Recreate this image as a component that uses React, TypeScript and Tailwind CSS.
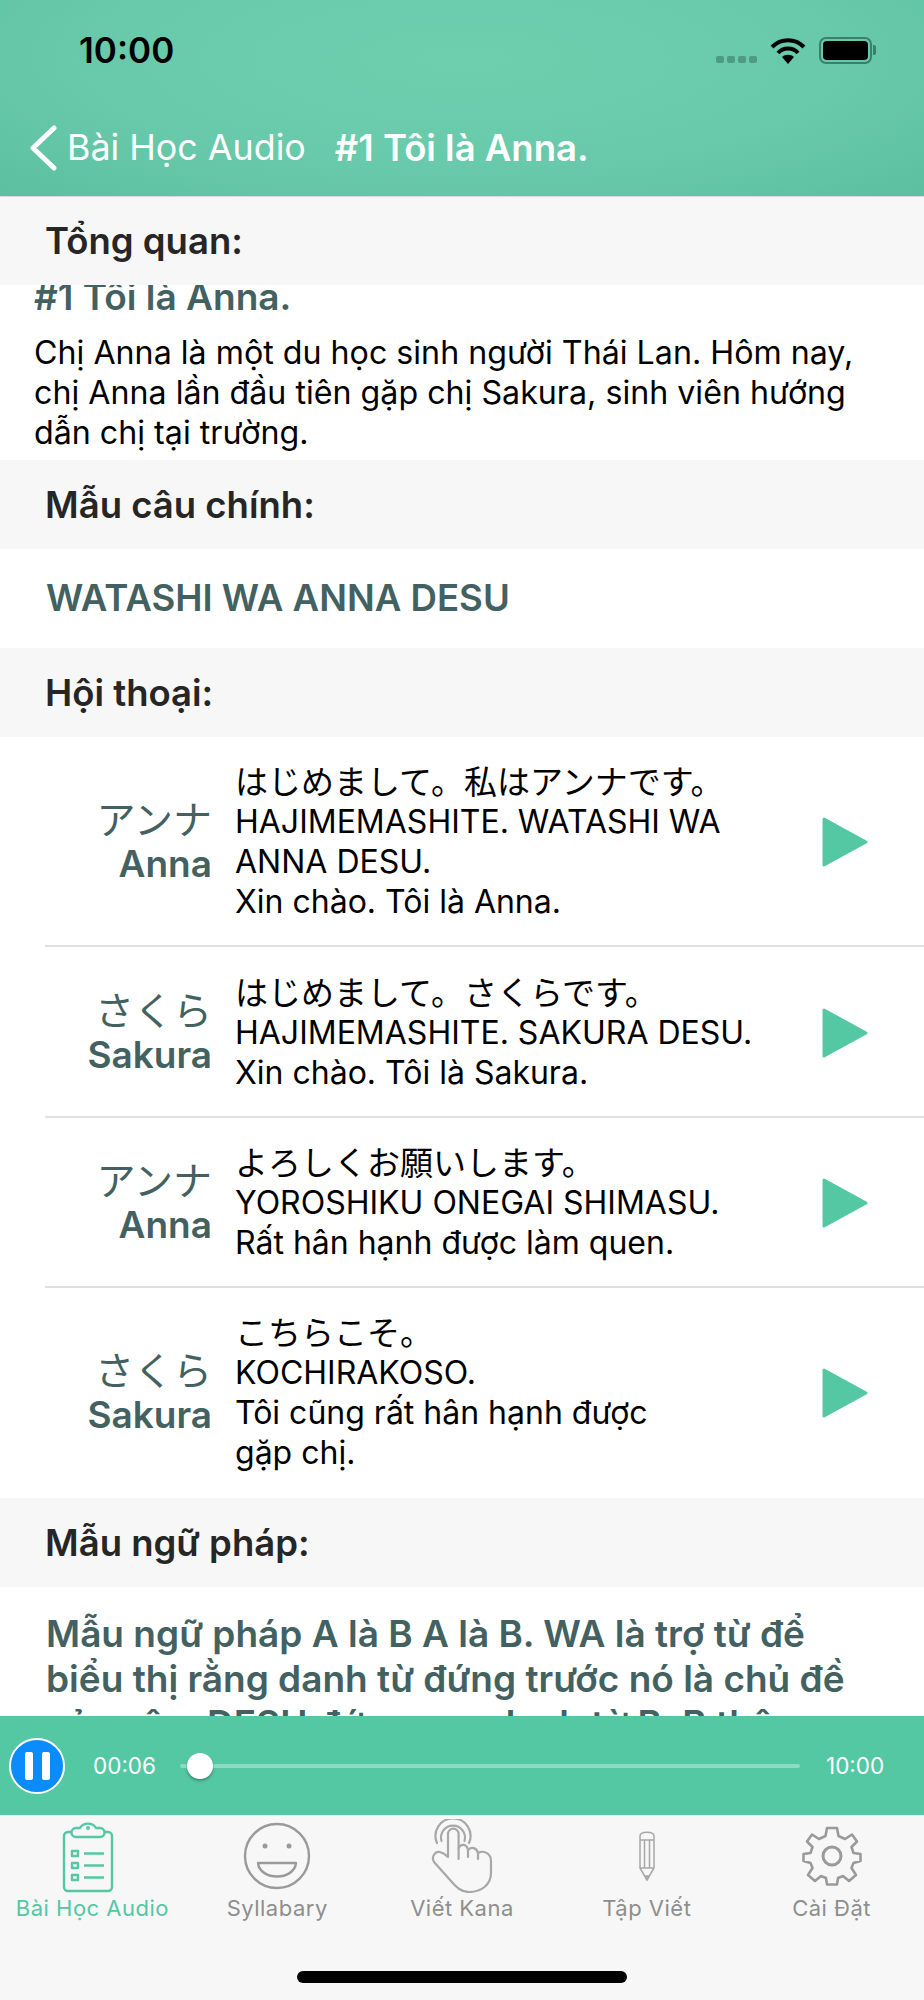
import React from "react";

const SectionHeader = ({ title }: { title: string }) => (
  <div className="h-[89px] shrink-0 bg-[#f7f7f7] pt-[23px] pl-[45px] text-[36.5px] leading-[44px] font-semibold text-[#262626]">
    {title}
  </div>
);

const PlayIcon = () => (
  <svg width="46" height="52" viewBox="0 0 46 52">
    <path d="M2 3 L44 26 L2 49 Z" fill="#54c7a3" stroke="#54c7a3" strokeWidth="3" strokeLinejoin="round" />
  </svg>
);

const dialogs = [
  {
    jp: "アンナ",
    name: "Anna",
    lines: ["はじめまして。私はアンナです。", "HAJIMEMASHITE. WATASHI WA", "ANNA DESU.", "Xin chào. Tôi là Anna."],
    h: "h-[210px]",
  },
  {
    jp: "さくら",
    name: "Sakura",
    lines: ["はじめまして。さくらです。", "HAJIMEMASHITE. SAKURA DESU.", "Xin chào. Tôi là Sakura."],
    h: "h-[171px]",
  },
  {
    jp: "アンナ",
    name: "Anna",
    lines: ["よろしくお願いします。", "YOROSHIKU ONEGAI SHIMASU.", "Rất hân hạnh được làm quen."],
    h: "h-[170px]",
  },
  {
    jp: "さくら",
    name: "Sakura",
    lines: ["こちらこそ。", "KOCHIRAKOSO.", "Tôi cũng rất hân hạnh được", "gặp chị."],
    h: "h-[210px]",
  },
];

const DialogRow = ({ row, last }: { row: (typeof dialogs)[number]; last: boolean }) => (
  <div className={`relative flex items-center ${row.h}`}>
    <div className="w-[212px] shrink-0 text-right text-[#436161]">
      <div className="text-[39px] leading-[44px]">{row.jp}</div>
      <div className="text-[37px] leading-[44px] font-semibold">{row.name}</div>
    </div>
    <div className="ml-[23px] w-[540px] text-[32px] leading-[40px] text-black">
      {row.lines.map((l, i) => (
        <div key={l} className={i === 0 ? "text-[33px]" : ""}>
          {l}
        </div>
      ))}
    </div>
    <div className="ml-[47px]">
      <PlayIcon />
    </div>
    {!last && <div className="absolute right-0 bottom-0 left-[45px] h-[2px] bg-[#e0e0e0]" />}
  </div>
);

const ClipboardIcon = () => (
  <svg width="60" height="74" viewBox="0 0 60 74" fill="none" stroke="#54c7a3" strokeWidth="2.4" strokeLinejoin="round">
    <path d="M10 13 H6 a4 4 0 0 0 -4 4 V68 a4 4 0 0 0 4 4 H46 a4 4 0 0 0 4 -4 V17 a4 4 0 0 0 -4 -4 H42" />
    <path d="M14 18 a4.5 4.5 0 0 1 0 -9 h4 a9 8 0 0 1 16 0 h4 a4.5 4.5 0 0 1 0 9 Z" />
    <circle cx="26" cy="9" r="0.8" fill="#54c7a3" />
    <rect x="10" y="32" width="6" height="5" />
    <rect x="10" y="44" width="6" height="5" />
    <rect x="10" y="56" width="6" height="5" />
    <path d="M22 34.5 H42 M22 46.5 H42 M22 58.5 H42" />
  </svg>
);

const SmileIcon = () => (
  <svg width="68" height="68" viewBox="0 0 68 68" fill="none" stroke="#9a9a9a" strokeWidth="2.4">
    <circle cx="34" cy="34" r="32" />
    <circle cx="22" cy="24" r="2.5" fill="#9a9a9a" stroke="none" />
    <circle cx="46" cy="24" r="2.5" fill="#9a9a9a" stroke="none" />
    <path d="M15 41 H53 C51 59 17 59 15 41 Z" strokeLinejoin="round" />
  </svg>
);

const HandIcon = () => (
  <svg width="62" height="74" viewBox="0 0 62 74" fill="none" stroke="#a8a8a8" strokeWidth="2.2" strokeLinecap="round" strokeLinejoin="round">
    <path d="M6 24 A17.5 17.5 0 1 1 38 24" />
    <path d="M10.5 22 A12 12 0 1 1 33.5 22" />
    <path d="M17 38 V15 A5.3 5.3 0 0 1 27.6 15 V29 C30 24 36 25 37 31 C40 27 46 29 47 34 C52 31 60 34 60 42 V54 C60 66 50 73 38 73 C30 73 25 68 20 62 L3 43 C0 38 4 32 9 33 C13 34 15 36 17 38 Z" />
    <path d="M27.6 29 V40 M37 31 V38 M47 34 V40" />
  </svg>
);

const PencilIcon = () => (
  <svg width="20" height="52" viewBox="0 0 20 52" fill="none" stroke="#a8a8a8" strokeWidth="1.5" strokeLinejoin="round">
    <path d="M3 6 C3 1 17 1 17 6 V38 L10 50 L3 38 Z" />
    <path d="M3 10 H17 M7.5 10 V38 M12.5 10 V38 M3 38 H17" />
    <path d="M8 46 H12 L10 50 Z" fill="#a8a8a8" />
  </svg>
);

const GearIcon = () => (
  <svg width="60" height="60" viewBox="0 0 60 60" fill="none" stroke="#9a9a9a" strokeWidth="2.6" strokeLinejoin="round">
    <path d="M25 2 H35 L36.5 10 L43 13 L50 8.5 L55 15.5 L49.5 21 L51.5 27 L58.5 28 V35 L51.5 37 L49.5 42 L54 49 L47 55 L41 50 L36 52 L35 58.5 H25 L24 52 L19 50 L13 55 L6 49 L10.5 42 L8.5 37 L1.5 35 V28 L8.5 27 L10.5 21 L5 15.5 L10 8.5 L17 13 L23.5 10 Z" />
    <circle cx="30" cy="30" r="9" strokeWidth="3" />
  </svg>
);

const tabs = [
  { label: "Bài Học Audio", icon: <ClipboardIcon />, active: true },
  { label: "Syllabary", icon: <SmileIcon />, active: false },
  { label: "Viết Kana", icon: <HandIcon />, active: false },
  { label: "Tập Viết", icon: <PencilIcon />, active: false },
  { label: "Cài Đặt", icon: <GearIcon />, active: false },
];

export default function App() {
  return (
    <div className="flex h-[2000px] w-[924px] flex-col overflow-hidden bg-white font-['Inter','Noto_Sans_CJK_JP',sans-serif]">
      {/* nav bar */}
      <div className="h-[197px] shrink-0 border-b border-[#d9d9d9] bg-[radial-gradient(ellipse_at_50%_30%,#6dcfae_0%,#68caaa_55%,#5cc0a0_100%)]">
        <div className="flex h-[100px] items-center justify-between pr-[48px] pl-[79px]">
          <span className="text-[35px] font-semibold text-black">10:00</span>
          <div className="flex items-center">
            <div className="mt-[18px] mr-[13px] flex gap-[3px]">
              {[0, 1, 2, 3].map((i) => (
                <div key={i} className="h-[7px] w-[8px] rounded-[2px] bg-[#4f9a82]" />
              ))}
            </div>
            <svg width="36" height="27" viewBox="0 0 36 27" fill="none" stroke="black" strokeWidth="4">
              <path d="M2 10 C11 1 25 1 34 10" />
              <path d="M8 16 C13 10 23 10 28 16" />
              <path d="M18 27 L12 20 C15 17 21 17 24 20 Z" fill="black" stroke="none" />
            </svg>
            <div className="ml-[13px] flex items-center">
              <div className="h-[27px] w-[53px] rounded-[7px] border-2 border-[#3c7f6b] p-[2px]">
                <div className="h-full w-full rounded-[4px] bg-black" />
              </div>
              <div className="ml-[1px] h-[10px] w-[3px] rounded-r-[2px] bg-[#3c7f6b]" />
            </div>
          </div>
        </div>
        <div className="flex h-[96px] items-center text-white">
          <svg className="ml-[28px]" width="30" height="46" viewBox="0 0 30 46" fill="none" stroke="white" strokeWidth="5" strokeLinecap="round" strokeLinejoin="round">
            <path d="M26 3 L5 23 L26 43" />
          </svg>
          <span className="ml-[9px] text-[35.8px] leading-none">Bài Học Audio</span>
          <span className="ml-[29px] text-[36.5px] leading-none font-semibold">#1 Tôi là Anna.</span>
        </div>
      </div>

      {/* content */}
      <div className="flex min-h-0 flex-1 flex-col overflow-hidden">
        <div className="h-[88px] shrink-0 bg-[#f7f7f7] pt-[22px] pl-[45px] text-[36.5px] leading-[44px] font-semibold text-[#262626]">
          Tổng quan:
        </div>
        <div className="h-[175px] shrink-0 overflow-hidden pl-[34px]">
          <div className="-mt-[10px] text-[37px] leading-[44px] font-semibold text-[#436161]">#1 Tôi là Anna.</div>
          <div className="mt-[14px] text-[32.2px] leading-[40px] text-black">
            <div>Chị Anna là một du học sinh người Thái Lan. Hôm nay,</div>
            <div>chị Anna lần đầu tiên gặp chị Sakura, sinh viên hướng</div>
            <div>dẫn chị tại trường.</div>
          </div>
        </div>
        <SectionHeader title="Mẫu câu chính:" />
        <div className="flex h-[99px] shrink-0 items-center pl-[46px] text-[36.6px] font-semibold text-[#436161]">
          WATASHI WA ANNA DESU
        </div>
        <SectionHeader title="Hội thoại:" />
        <div className="shrink-0">
          {dialogs.map((row, i) => (
            <DialogRow key={i} row={row} last={i === dialogs.length - 1} />
          ))}
        </div>
        <SectionHeader title="Mẫu ngữ pháp:" />
        <div className="pt-[24px] pl-[46px] text-[37px] leading-[45px] font-semibold whitespace-nowrap text-[#436161]">
          <div>Mẫu ngữ pháp A là B A là B. WA là trợ từ để</div>
          <div>biểu thị rằng danh từ đứng trước nó là chủ đề</div>
          <div>của câu. DESU đứng sau danh từ B. B thêm</div>
        </div>
      </div>

      {/* player */}
      <div className="flex h-[99px] shrink-0 items-center bg-[#54c7a3]">
        <div className="ml-[9px] flex h-[56px] w-[56px] items-center justify-center gap-[9px] rounded-full border-2 border-white bg-[#0a8cff]">
          <div className="h-[28px] w-[8px] rounded-[2px] bg-white" />
          <div className="h-[28px] w-[8px] rounded-[2px] bg-white" />
        </div>
        <span className="ml-[28px] w-[62px] text-[22.5px] text-white">00:06</span>
        <div className="relative ml-[25px] h-[4px] w-[620px] rounded-full bg-white/35">
          <div className="absolute top-1/2 left-[7px] h-[26px] w-[26px] -translate-y-1/2 rounded-full bg-white shadow-[0_2px_3px_rgba(0,0,0,0.3)]" />
        </div>
        <span className="ml-[26px] text-[22.5px] text-white">10:00</span>
      </div>

      {/* tab bar */}
      <div className="relative h-[185px] shrink-0 bg-[#f7f7f7]">
        <div className="grid grid-cols-5">
          {tabs.map((t) => (
            <div key={t.label} className="flex flex-col items-center">
              <div className="flex h-[78px] items-center justify-center pt-[4px]">{t.icon}</div>
              <div className={`mt-[1px] text-[22px] leading-[28px] tracking-[0.5px] ${t.active ? "text-[#54c7a3]" : "text-[#8e8e8e]"}`}>
                {t.label}
              </div>
            </div>
          ))}
        </div>
        <div className="absolute bottom-[17px] left-[297px] h-[12px] w-[330px] rounded-full bg-black" />
      </div>
    </div>
  );
}
